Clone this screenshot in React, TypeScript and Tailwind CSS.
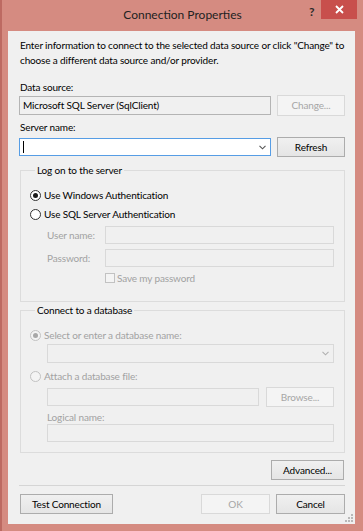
import React from "react";

const font = { fontFamily: 'Lato, "Open Sans", sans-serif' };

const Radio = ({ checked, disabled }: { checked?: boolean; disabled?: boolean }) => (
  <span
    className={`flex items-center justify-center w-[11px] h-[11px] rounded-full border ${
      disabled ? "border-[#c2c2c2] bg-[#f4f4f4]" : "border-[#333] bg-white"
    }`}
  >
    {checked && (
      <span className={`w-[5px] h-[5px] rounded-full ${disabled ? "bg-[#a8a8a8]" : "bg-[#1a1a1a]"}`} />
    )}
  </span>
);

const Btn = ({
  children,
  disabled,
  className = "",
}: {
  children: React.ReactNode;
  disabled?: boolean;
  className?: string;
}) => (
  <div
    className={`flex items-center justify-center border text-[10px] whitespace-nowrap ${
      disabled
        ? "border-[#d9d9d9] bg-[#f4f4f4] text-[#a6a6a6]"
        : "border-[#acacac] bg-gradient-to-b from-[#f0f0f0] to-[#e5e5e5] text-black"
    } ${className}`}
  >
    {children}
  </div>
);

const Chevron = ({ color }: { color: string }) => (
  <svg width="7" height="5" viewBox="0 0 7 5" className="mr-[4px]">
    <path d="M0.5 0.8 L3.5 3.8 L6.5 0.8" fill="none" stroke={color} strokeWidth="1.1" />
  </svg>
);

export default function App() {
  return (
    <div
      className="w-[363px] h-[531px] bg-[#d58b81] flex flex-col border-l-2 border-[#bd6a62] relative overflow-hidden"
      style={font}
    >
      {/* title bar */}
      <div className="h-[31px] flex items-start relative">
        <div className="flex-1 text-center text-[12px] leading-[30px] text-[#222]">
          Connection Properties
        </div>
        <div className="absolute left-[307px] top-[3px] text-[12px] font-bold text-[#2b2b2b]">?</div>
        <div className="absolute left-[319px] top-0 w-[36px] h-[19px] bg-[#c84f4c] flex items-center justify-center">
          <svg width="9" height="9" viewBox="0 0 9 9">
            <path d="M1 1 L8 8 M8 1 L1 8" stroke="#fff" strokeWidth="1.8" />
          </svg>
        </div>
      </div>

      {/* body */}
      <div className="ml-[6px] w-[347px] h-[493px] bg-[#f0f0f0] pl-[11px] pr-[10px] text-[10px] tracking-[-0.15px] text-black whitespace-nowrap relative">
        <p className="mt-[7px] ml-[1px] leading-[15px]">
          Enter information to connect to the selected data source or click "Change" to
          <br />
          choose a different data source and/or provider.
        </p>

        <div className="mt-[12px] ml-[1px] leading-[15px]">Data source:</div>
        <div className="flex items-center justify-between h-[21px]">
          <div className="w-[252px] h-[19px] border border-[#b4b4b4] bg-[#f0f0f0] flex items-center pl-[3px]">
            Microsoft SQL Server (SqlClient)
          </div>
          <Btn disabled className="w-[68px] h-[21px]">
            Change...
          </Btn>
        </div>

        <div className="mt-[4px] ml-[1px] leading-[15px]">Server name:</div>
        <div className="mt-[2px] flex items-center justify-between h-[20px]">
          <div className="w-[252px] h-[18px] border border-[#569de5] bg-white flex items-center justify-between pl-[3px]">
            <span className="w-px h-[12px] bg-black" />
            <Chevron color="#555" />
          </div>
          <Btn className="w-[68px] h-[20px]">Refresh</Btn>
        </div>

        {/* group 1 */}
        <fieldset className="mt-[6px] ml-[1px] border border-[#dcdcdc] pl-[9px] pr-[10px] pb-[16px]">
          <legend className="ml-[5px] px-[2px] leading-[15px]">Log on to the server</legend>
          <div className="mt-[9px] h-[16px] flex items-center gap-[3px]">
            <Radio checked />
            <span>Use Windows Authentication</span>
          </div>
          <div className="mt-[3px] h-[16px] flex items-center gap-[3px]">
            <Radio />
            <span>Use SQL Server Authentication</span>
          </div>
          <div className="mt-[4px] flex items-center justify-between pl-[17px] text-[#a2a2a2]">
            <span>User name:</span>
            <div className="w-[229px] h-[18px] border border-[#d9d9d9] bg-[#f0f0f0]" />
          </div>
          <div className="mt-[5px] flex items-center justify-between pl-[17px] text-[#a2a2a2]">
            <span>Password:</span>
            <div className="w-[229px] h-[18px] border border-[#d9d9d9] bg-[#f0f0f0]" />
          </div>
          <div className="mt-[4px] h-[14px] flex items-center gap-[2px] pl-[75px] text-[#a2a2a2]">
            <span className="w-[10px] h-[10px] border border-[#c2c2c2] bg-[#f4f4f4]" />
            <span>Save my password</span>
          </div>
        </fieldset>

        {/* group 2 */}
        <fieldset className="mt-[1px] ml-[1px] border border-[#dcdcdc] pl-[9px] pr-[10px] pb-[10px]">
          <legend className="ml-[5px] px-[2px] leading-[15px]">Connect to a database</legend>
          <div className="mt-[10px] h-[15px] flex items-center gap-[3px] text-[#a2a2a2]">
            <Radio checked disabled />
            <span>Select or enter a database name:</span>
          </div>
          <div className="mt-[1px] ml-[17px] h-[19px] border border-[#d9d9d9] bg-[#f0f0f0] flex items-center justify-end">
            <Chevron color="#b0b0b0" />
          </div>
          <div className="mt-[6px] h-[15px] flex items-center gap-[3px] text-[#a2a2a2]">
            <Radio disabled />
            <span>Attach a database file:</span>
          </div>
          <div className="mt-[3px] ml-[17px] h-[20px] flex items-center justify-between">
            <div className="w-[212px] h-[18px] border border-[#d9d9d9] bg-[#f0f0f0]" />
            <Btn disabled className="w-[68px] h-[20px]">
              Browse...
            </Btn>
          </div>
          <div className="mt-[3px] ml-[17px] leading-[14px] text-[#a2a2a2]">Logical name:</div>
          <div className="ml-[17px] h-[18px] border border-[#d9d9d9] bg-[#f0f0f0]" />
        </fieldset>

        <div className="mt-[7px] flex justify-end pr-[1px]">
          <Btn className="w-[73px] h-[20px]">Advanced...</Btn>
        </div>

        <div className="mt-[5px] h-px bg-[#d5d5d5]" />

        <div className="mt-[8px] flex items-center pl-[1px]">
          <Btn className="w-[93px] h-[20px]">Test Connection</Btn>
          <div className="flex-1" />
          <Btn disabled className="w-[69px] h-[20px]">
            OK
          </Btn>
          <Btn className="ml-[6px] w-[69px] h-[20px]">Cancel</Btn>
        </div>

        {/* resize grip */}
        <svg width="8" height="8" viewBox="0 0 8 8" className="absolute right-[2px] bottom-[2px]">
          {[
            [6, 0],
            [3, 3],
            [6, 3],
            [0, 6],
            [3, 6],
            [6, 6],
          ].map(([x, y], i) => (
            <rect key={i} x={x} y={y} width="2" height="2" fill="#b8b8b8" />
          ))}
        </svg>
      </div>
    </div>
  );
}
